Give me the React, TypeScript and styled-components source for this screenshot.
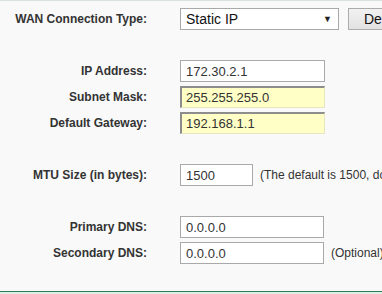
import React from 'react';
import styled, { createGlobalStyle } from 'styled-components';

const GlobalStyle = createGlobalStyle`
  html, body {
    margin: 0;
    padding: 0;
    background: #f9f9f9;
    overflow: hidden;
  }
`;

const Page = styled.div`
  width: 382px;
  height: 294px;
  box-sizing: border-box;
  border-top: 1px solid #d9e2de;
  padding-top: 5px;
  display: flex;
  flex-direction: column;
  font-family: Arial, "Liberation Sans", sans-serif;
  color: #333;
  overflow: hidden;
`;

const Row = styled.div`
  height: 26px;
  flex: none;
  display: flex;
  align-items: center;
  white-space: nowrap;
`;

const Spacer = styled.div<{ $h: number }>`
  height: ${(p) => p.$h}px;
  flex: none;
`;

const Label = styled.div`
  width: 147px;
  flex: none;
  text-align: right;
  font-size: 12px;
  font-weight: bold;
  color: #333;
`;

const Field = styled.div<{ $w: number; $hint?: boolean }>`
  margin-left: 33px;
  width: ${(p) => p.$w}px;
  height: 22px;
  box-sizing: border-box;
  flex: none;
  display: flex;
  align-items: center;
  padding-left: 5px;
  font-size: 13px;
  color: #333;
  background: ${(p) => (p.$hint ? '#ffffc6' : '#fff')};
  border: 1px solid ${(p) => (p.$hint ? '#e6e6c0' : '#a9a9a9')};
  ${(p) =>
    p.$hint &&
    `
    border-top: 2px solid #8d8d8d;
    border-left: 2px solid #8d8d8d;
    padding-left: 4px;
  `}
`;

const Select = styled.div`
  margin-left: 33px;
  width: 159px;
  height: 22px;
  box-sizing: border-box;
  flex: none;
  display: flex;
  align-items: center;
  justify-content: space-between;
  padding: 0 6px 0 5px;
  background: #fff;
  border: 1px solid #a9a9a9;
  font-size: 14px;
  color: #111;
`;

const Arrow = styled.span`
  font-size: 9px;
  color: #222;
`;

const Button = styled.div`
  margin-left: 9px;
  height: 22px;
  width: 60px;
  box-sizing: border-box;
  flex: none;
  border: 1px solid #acacac;
  border-right: none;
  background: linear-gradient(#f2f2f2, #e2e2e2);
  font-size: 14px;
  color: #111;
  display: flex;
  align-items: center;
  padding-left: 15px;
`;

const Note = styled.span`
  margin-left: 7px;
  font-size: 12px;
  color: #333;
`;

const Footer = styled.div`
  margin-top: auto;
  height: 2px;
  flex: none;
  border-top: 1px solid #2f7d56;
  background: #dcefe4;
`;

export default function App() {
  return (
    <>
      <GlobalStyle />
      <Page>
        <Row>
          <Label>WAN Connection Type:</Label>
          <Select>
            Static IP
            <Arrow>▼</Arrow>
          </Select>
          <Button>Detect</Button>
        </Row>
        <Spacer $h={26} />
        <Row>
          <Label>IP Address:</Label>
          <Field $w={145}>172.30.2.1</Field>
        </Row>
        <Row>
          <Label>Subnet Mask:</Label>
          <Field $w={145} $hint>255.255.255.0</Field>
        </Row>
        <Row>
          <Label>Default Gateway:</Label>
          <Field $w={145} $hint>192.168.1.1</Field>
        </Row>
        <Spacer $h={26} />
        <Row>
          <Label>MTU Size (in bytes):</Label>
          <Field $w={73}>1500</Field>
          <Note>(The default is 1500, do not change unless necessary.)</Note>
        </Row>
        <Spacer $h={26} />
        <Row>
          <Label>Primary DNS:</Label>
          <Field $w={144}>0.0.0.0</Field>
        </Row>
        <Row>
          <Label>Secondary DNS:</Label>
          <Field $w={144}>0.0.0.0</Field>
          <Note>(Optional)</Note>
        </Row>
        <Footer />
      </Page>
    </>
  );
}
